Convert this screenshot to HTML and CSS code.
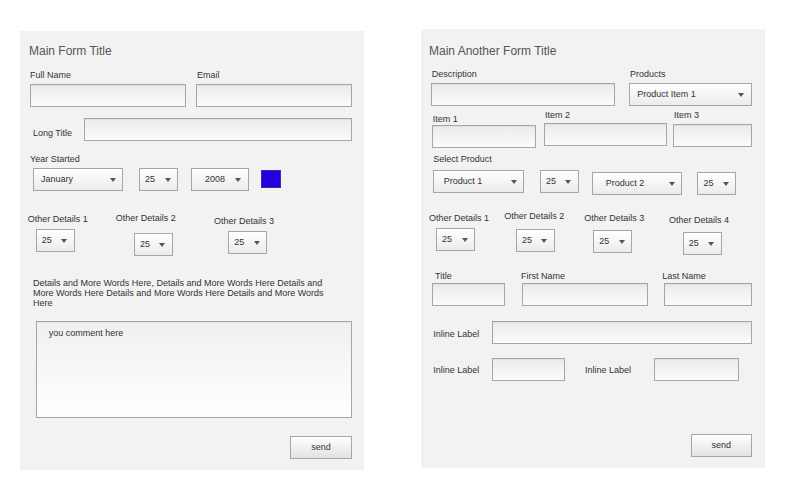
FILE: index.html
```html
<!DOCTYPE html>
<html>
<head>
<meta charset="utf-8">
<title>Forms</title>
<link rel="stylesheet" href="styles.css">
</head>
<body>
<div class="page">
  <section class="panel panel-left">
    <h1 class="title">Main Form Title</h1>

    <div class="row l-names">
      <div class="field"><span class="lbl">Full Name</span><div class="ctrl input"></div></div>
      <div class="field"><span class="lbl">Email</span><div class="ctrl input"></div></div>
    </div>

    <div class="row l-long">
      <span class="lbl">Long Title</span>
      <div class="ctrl input"></div>
    </div>

    <div class="l-year">
      <span class="lbl">Year Started</span>
      <div class="row sels">
        <div class="ctrl select s-jan"><span>January</span></div>
        <div class="ctrl select small s-day"><span>25</span></div>
        <div class="ctrl select s-yr"><span>2008</span></div>
        <div class="swatch"></div>
      </div>
    </div>

    <div class="row l-od">
      <div class="field od1"><span class="lbl">Other Details 1</span><div class="ctrl select small"><span>25</span></div></div>
      <div class="field od2"><span class="lbl">Other Details 2</span><div class="ctrl select small"><span>25</span></div></div>
      <div class="field od3"><span class="lbl">Other Details 3</span><div class="ctrl select small"><span>25</span></div></div>
    </div>

    <p class="para">Details and More Words Here, Details and More Words Here Details and<br>More Words Here Details and More Words Here Details and More Words<br>Here</p>

    <div class="ctrl textarea"><span>you comment here</span></div>

    <div class="btn l-send">send</div>
  </section>

  <section class="panel panel-right">
    <h1 class="title">Main Another Form Title</h1>

    <div class="row r-desc">
      <div class="field f-desc"><span class="lbl">Description</span><div class="ctrl input"></div></div>
      <div class="field f-prod"><span class="lbl">Products</span><div class="ctrl select"><span>Product Item 1</span></div></div>
    </div>

    <div class="row r-items">
      <div class="field it1"><span class="lbl">Item 1</span><div class="ctrl input"></div></div>
      <div class="field it2"><span class="lbl">Item 2</span><div class="ctrl input"></div></div>
      <div class="field it3"><span class="lbl">Item 3</span><div class="ctrl input"></div></div>
    </div>

    <div class="r-sel">
      <span class="lbl">Select Product</span>
      <div class="row sels">
        <div class="ctrl select s-p1"><span>Product 1</span></div>
        <div class="ctrl select small s-d1"><span>25</span></div>
        <div class="ctrl select s-p2"><span>Product 2</span></div>
        <div class="ctrl select small s-d2"><span>25</span></div>
      </div>
    </div>

    <div class="row r-od">
      <div class="field od1"><span class="lbl">Other Details 1</span><div class="ctrl select small"><span>25</span></div></div>
      <div class="field od2"><span class="lbl">Other Details 2</span><div class="ctrl select small"><span>25</span></div></div>
      <div class="field od3"><span class="lbl">Other Details 3</span><div class="ctrl select small"><span>25</span></div></div>
      <div class="field od4"><span class="lbl">Other Details 4</span><div class="ctrl select small"><span>25</span></div></div>
    </div>

    <div class="row r-names">
      <div class="field n-title"><span class="lbl">Title</span><div class="ctrl input"></div></div>
      <div class="field n-first"><span class="lbl">First Name</span><div class="ctrl input"></div></div>
      <div class="field n-last"><span class="lbl">Last Name</span><div class="ctrl input"></div></div>
    </div>

    <div class="row r-inl1">
      <span class="lbl">Inline Label</span>
      <div class="ctrl input"></div>
    </div>

    <div class="row r-inl2">
      <span class="lbl il-a">Inline Label</span>
      <div class="ctrl input in-a"></div>
      <span class="lbl il-b">Inline Label</span>
      <div class="ctrl input in-b"></div>
    </div>

    <div class="btn r-send">send</div>
  </section>
</div>
</body>
</html>
```

FILE: styles.css
```css
* { box-sizing: border-box; margin: 0; padding: 0; }

body {
  background: #ffffff;
  font-family: "Liberation Sans", Arial, sans-serif;
  font-size: 9px;
  line-height: 11px;
  color: #333333;
}

.page {
  display: flex;
  align-items: flex-start;
  width: 800px;
  height: 500px;
  padding-left: 20px;
}

.panel {
  background: #f2f2f2;
  width: 344px;
  height: 439px;
  display: flex;
  flex-direction: column;
  flex: none;
}
.panel > * { flex: none; }
.panel-left { margin-top: 31px; }
.panel-right { margin-top: 29px; margin-left: 57px; }

.title {
  font-size: 12px;
  line-height: 16px;
  font-weight: normal;
  color: #555555;
}
.panel-left .title { height: 36px; padding: 12px 0 0 9px; }
.panel-right .title { height: 38px; padding: 13.6px 0 0 8px; }

.row { display: flex; align-items: flex-start; }
.field { display: flex; flex-direction: column; align-items: flex-start; flex: none; }
.lbl { display: block; white-space: nowrap; flex: none; }

.ctrl {
  height: 23px;
  border: 1px solid #a6a6a6;
  flex: none;
}
.input {
  background: linear-gradient(#ebebeb, #fbfbfb);
  box-shadow: inset 0 1px 1px rgba(0, 0, 0, 0.05);
}
.select {
  background: linear-gradient(#ffffff, #ebebeb);
  display: flex;
  align-items: center;
  justify-content: space-between;
  padding: 0 6.5px 0 7px;
  white-space: nowrap;
}
.select::after {
  content: "";
  border-left: 3px solid transparent;
  border-right: 3px solid transparent;
  border-top: 4px solid #555555;
  margin-top: 1px;
}
.select.small { width: 39px; padding-left: 5px; }

.btn {
  height: 23px;
  border: 1px solid #a6a6a6;
  background: linear-gradient(#ffffff, #e2e2e2);
  display: flex;
  align-items: center;
  justify-content: center;
  color: #333333;
}

/* ---------- left panel ---------- */
.l-names { height: 40px; padding-left: 10px; gap: 10px; }
.l-names .lbl { margin-top: 2.6px; }
.l-names .field + .field .lbl { margin-left: 1px; }
.l-names .ctrl { margin-top: 3.4px; width: 156px; }

.l-long { height: 34px; }
.l-long .lbl { margin: 20.6px 0 0 13px; width: 51px; }
.l-long .ctrl { margin-top: 11px; width: 268px; }

.l-year { height: 50px; }
.l-year .lbl { margin: 12.6px 0 0 10px; }
.l-year .sels { margin-top: 3.4px; }
.s-jan { margin-left: 13px; width: 90px; }
.s-day { margin-left: 16px; }
.s-yr { margin-left: 13px; width: 58px; padding-left: 13px; padding-right: 7.5px; }
.swatch {
  margin: 2px 0 0 12px;
  width: 20px;
  height: 18px;
  background-color: #2400e6;
  background-image:
    repeating-linear-gradient(90deg, rgba(0, 0, 60, 0.18) 0 1px, transparent 1px 6px),
    repeating-linear-gradient(0deg, rgba(0, 0, 60, 0.18) 0 1px, transparent 1px 6px);
  border: 1px solid #3b2bb8;
  flex: none;
}

.l-od { height: 65px; display: grid; grid-template-columns: 88px 98.3px auto; padding-left: 7.7px; align-items: start; }
.l-od .od1 .lbl { margin-top: 23.1px; }
.l-od .od1 .ctrl { margin: 4.2px 0 0 8px; }
.l-od .od2 .lbl { margin-top: 22.4px; }
.l-od .od2 .ctrl { margin: 8.9px 0 0 18.3px; }
.l-od .od3 .lbl { margin-top: 24.8px; }
.l-od .od3 .ctrl { margin: 3.9px 0 0 14.3px; }

.para {
  padding: 21.6px 0 0 13px;
  line-height: 10.3px;
  white-space: nowrap;
}

.textarea {
  margin: 12.4px 0 0 15.7px;
  width: 316px;
  height: 97.3px;
  background: linear-gradient(#f0f0f0, #ffffff);
  box-shadow: inset 0 1px 1px rgba(0, 0, 0, 0.05);
  padding: 6.6px 12px;
}

.l-send { margin: 17.4px 0 0 270px; width: 62px; height: 23.3px; }

/* ---------- right panel ---------- */
.r-desc { height: 39px; padding-left: 9.7px; }
.r-desc .lbl { margin-top: 1.5px; }
.f-desc .lbl { margin-left: 1px; }
.f-desc .ctrl { margin-top: 3.5px; width: 184.3px; }
.f-prod { margin-left: 14.3px; }
.f-prod .lbl { margin-left: 0.7px; }
.f-prod .ctrl { margin-top: 3.8px; width: 122.4px; }

.r-items { height: 42px; padding-left: 11.3px; }
.it1 .lbl { margin: 8px 0 0 0.4px; }
.it1 .ctrl { width: 103.7px; }
.it2 { margin-left: 8.3px; }
.it2 .lbl { margin: 4.3px 0 0 0.7px; }
.it2 .ctrl { margin-top: 2px; width: 122.4px; }
.it3 { margin-left: 6.6px; }
.it3 .lbl { margin: 4.3px 0 0 0.7px; }
.it3 .ctrl { margin-top: 2.7px; width: 78.4px; }

.r-sel { height: 46px; }
.r-sel .lbl { margin: 5.6px 0 0 12.3px; }
.r-sel .sels { margin-top: 5.4px; padding-left: 12.3px; }
.s-p1 { width: 91px; padding-left: 9.4px; }
.s-d1 { margin-left: 15.7px; }
.s-p2 { margin: 1.7px 0 0 13px; width: 90.4px; padding-left: 12.7px; }
.s-d2 { margin: 1.7px 0 0 15px; }

.r-od { height: 60px; display: grid; grid-template-columns: 75.3px 80px 84.7px auto; padding-left: 8px; align-items: start; }
.r-od .od1 .lbl { margin-top: 18.9px; }
.r-od .od1 .ctrl { margin: 3.8px 0 0 7px; }
.r-od .od2 .lbl { margin-top: 16.6px; }
.r-od .od2 .ctrl { margin: 7.7px 0 0 11.7px; }
.r-od .od3 .lbl { margin-top: 18.6px; }
.r-od .od3 .ctrl { margin: 6.4px 0 0 9px; }
.r-od .od4 .lbl { margin-top: 20.6px; }
.r-od .od4 .ctrl { margin: 6.1px 0 0 13.7px; }

.r-names { height: 53px; display: grid; grid-template-columns: 88.7px 141.3px auto; padding-left: 11.3px; align-items: start; }
.r-names .lbl { margin-top: 16.6px; }
.n-title .lbl { margin-left: 2.7px; }
.n-title .ctrl { margin-top: 1.7px; width: 72.7px; }
.n-first .ctrl { margin: 1.1px 0 0 1.3px; width: 126px; }
.n-last .ctrl { margin: 1.1px 0 0 2px; width: 88px; }

.r-inl1 { height: 37px; }
.r-inl1 .lbl { margin: 21.9px 0 0 12.3px; width: 58.4px; }
.r-inl1 .ctrl { margin-top: 14px; width: 260.6px; }

.r-inl2 { height: 38px; }
.r-inl2 .lbl { margin-top: 20.6px; }
.il-a { margin-left: 12.3px; width: 58.4px; }
.in-a { margin-top: 14.3px; width: 73.3px; }
.il-b { margin-left: 20px; width: 69.3px; }
.in-b { margin-top: 14.3px; width: 84.7px; }

.r-send { margin: 52px 0 0 269.7px; width: 61px; height: 22.7px; }
```
